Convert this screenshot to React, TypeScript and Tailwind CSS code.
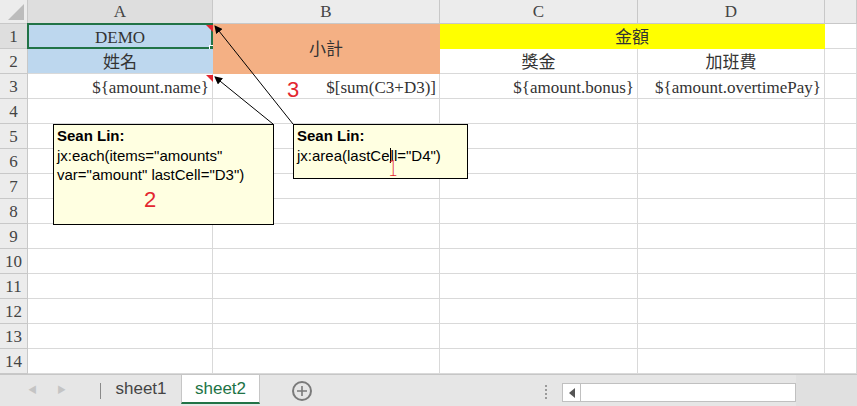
import React from "react";

const serif = "font-['Liberation_Serif','Noto_Sans_CJK_TC',serif]";
const sans = "font-['Liberation_Sans','Noto_Sans_CJK_TC',sans-serif]";

const cols = ["A", "B", "C", "D", ""];

function HeaderCell({ label, active }: { label: string; active?: boolean }) {
  return (
    <div
      className={`flex items-center justify-center border-r border-b border-[#c8c8c8] pt-[1px] text-[17px] text-[#444] ${serif} ${
        active ? "bg-[#dedede]" : "bg-[#ececec]"
      }`}
    >
      {label}
    </div>
  );
}

function RowNum({ n, active }: { n: number; active?: boolean }) {
  return (
    <div
      className={`flex items-center justify-center border-r border-b border-[#c8c8c8] pt-[2px] text-[17px] text-[#444] ${serif} ${
        active ? "bg-[#dedede]" : "bg-[#ececec]"
      }`}
    >
      {n}
    </div>
  );
}

function Cell({
  children,
  className = "",
}: {
  children?: React.ReactNode;
  className?: string;
}) {
  return (
    <div
      className={`relative flex items-center border-r border-b border-[#d9d9d9] px-[3px] pt-[3px] text-[17px] text-[#333] ${serif} ${className}`}
    >
      {children}
    </div>
  );
}

function Comment({
  className,
  lines,
}: {
  className: string;
  lines: string[];
}) {
  return (
    <div
      className={`absolute border border-black bg-[#ffffe1] px-[3px] pt-[1px] text-[15px] leading-[19.5px] text-black ${sans} ${className}`}
    >
      <div className="font-bold">Sean Lin:</div>
      {lines.map((l) => (
        <div key={l} className="whitespace-nowrap">
          {l}
        </div>
      ))}
    </div>
  );
}

export default function App() {
  return (
    <div className="relative h-[406px] w-[857px] overflow-hidden bg-white">
      <div className="grid grid-cols-[28px_185px_227px_198px_187px_1fr] grid-rows-[24px_repeat(14,25px)]">
        {/* corner */}
        <div className="relative border-r border-b border-[#c8c8c8] bg-[#ececec]">
          <div className="absolute right-[3px] bottom-[3px] h-0 w-0 border-b-[16px] border-l-[16px] border-b-[#bcbcbc] border-l-transparent" />
        </div>
        {cols.map((c, i) => (
          <HeaderCell key={i} label={c} active={c === "A"} />
        ))}

        {/* row 1 */}
        <RowNum n={1} active />
        <Cell className="justify-center border-[#bdd7ee] bg-[#bdd7ee]">
          DEMO
          <div className="absolute -top-[1px] -left-[1px] -right-[1px] -bottom-[1px] border-2 border-[#217346]" />
          <div className="absolute -right-[3px] -bottom-[3px] h-[6px] w-[6px] border border-white bg-[#217346]" />
        </Cell>
        <Cell className="row-span-2 justify-center border-[#f4b084] bg-[#f4b084]">
          小計
        </Cell>
        <Cell className="col-span-2 justify-center border-[#ffff00] bg-[#ffff00]">
          金額
        </Cell>
        <Cell />

        {/* row 2 */}
        <RowNum n={2} />
        <Cell className="justify-center border-r-[#bdd7ee] bg-[#bdd7ee]">姓名</Cell>
        <Cell className="justify-center">獎金</Cell>
        <Cell className="justify-center">加班費</Cell>
        <Cell />

        {/* row 3 */}
        <RowNum n={3} />
        <Cell className="justify-end">{"${amount.name}"}</Cell>
        <Cell className="justify-end">
          <span
            className={`absolute left-[74px] top-[3px] text-[22px] leading-[25px] text-[#e3262f] ${sans}`}
          >
            3
          </span>
          {"$[sum(C3+D3)]"}
        </Cell>
        <Cell className="justify-end">{"${amount.bonus}"}</Cell>
        <Cell className="justify-end">{"${amount.overtimePay}"}</Cell>
        <Cell />

        {Array.from({ length: 11 }, (_, r) => (
          <React.Fragment key={r}>
            <RowNum n={r + 4} />
            <Cell />
            <Cell />
            <Cell />
            <Cell />
            <Cell />
          </React.Fragment>
        ))}
      </div>

      {/* comment indicators and arrows */}
      <svg
        className="pointer-events-none absolute top-0 left-0"
        width={857}
        height={406}
      >
        <defs>
          <marker
            id="ah"
            markerWidth="8"
            markerHeight="8"
            refX="7"
            refY="4"
            orient="auto"
            markerUnits="userSpaceOnUse"
          >
            <path d="M0,0 L8,4 L0,8 z" fill="#000" />
          </marker>
        </defs>
        <polygon points="206,25 213,25 213,32" fill="#e3262f" />
        <polygon points="206,75 213,75 213,82" fill="#e3262f" />
        <line x1="293" y1="124" x2="215" y2="26" stroke="#000" strokeWidth="1" markerEnd="url(#ah)" />
        <line x1="273" y1="124" x2="215" y2="77" stroke="#000" strokeWidth="1" markerEnd="url(#ah)" />
      </svg>

      <Comment
        className="left-[53px] top-[124px] h-[101px] w-[221px]"
        lines={['jx:each(items="amounts"', 'var="amount" lastCell="D3")']}
      />
      <span
        className={`absolute left-[144px] top-[187px] text-[22px] leading-[25px] text-[#e3262f] ${sans}`}
      >
        2
      </span>

      <div
        className={`absolute left-[293px] top-[124px] h-[55px] w-[175px] border border-black bg-[#ffffe1] px-[3px] pt-[1px] text-[15px] leading-[19.5px] text-black ${sans}`}
      >
        <div className="font-bold">Sean Lin:</div>
        <div className="relative whitespace-nowrap">
          jx:area(lastCe
          <span className="inline-block h-[15px] w-px translate-y-[2px] bg-black" />
          ll="D4")
        </div>
        <span className="absolute left-[92px] top-[31px] text-[22px] font-light leading-[25px] text-[#e3262f] font-['DejaVu_Sans',sans-serif] scale-x-75">
          1
        </span>
      </div>

      {/* sheet tab bar */}
      <div
        className={`flex h-[32px] items-start border-t border-[#c6c6c6] bg-[#e6e6e6] ${sans}`}
      >
        <div className="flex h-full w-[100px] items-center text-[9px] text-[#c4c4c4]">
          <span className="ml-[28px]">◀</span>
          <span className="ml-[20px]">▶</span>
        </div>
        <div className="mt-[8px] h-[16px] w-px bg-[#8a8a8a]" />
        <div className="flex h-[27px] w-[80px] items-center justify-center text-[17px] text-[#444]">
          sheet1
        </div>
        <div className="flex h-[29px] w-[79px] items-center justify-center border-x border-[#c6c6c6] border-b-2 border-b-[#217346] bg-white text-[17px] text-[#217346]">
          sheet2
        </div>
        <div className="ml-[32px] mt-[6px] flex h-[20px] w-[20px] items-center justify-center rounded-full border-2 border-[#7a7a7a]">
          <svg width="10" height="10" viewBox="0 0 10 10">
            <path d="M5 0 V10 M0 5 H10" stroke="#7a7a7a" strokeWidth="1.6" />
          </svg>
        </div>
        <div className="ml-[233px] mt-[10px] flex flex-col gap-[2px]">
          <div className="h-[2px] w-[2px] bg-[#9a9a9a]" />
          <div className="h-[2px] w-[2px] bg-[#9a9a9a]" />
          <div className="h-[2px] w-[2px] bg-[#9a9a9a]" />
          <div className="h-[2px] w-[2px] bg-[#9a9a9a]" />
        </div>
        <div className="ml-[15px] mt-[8px] flex h-[19px] w-[234px] border border-[#c0c0c0] bg-white">
          <div className="flex w-[18px] items-center justify-center border-r border-[#c0c0c0]">
            <div className="h-0 w-0 border-y-[5px] border-r-[6px] border-y-transparent border-r-[#555]" />
          </div>
        </div>
        <div className="flex-1 self-stretch bg-[#e0e0e0]" />
      </div>
    </div>
  );
}
